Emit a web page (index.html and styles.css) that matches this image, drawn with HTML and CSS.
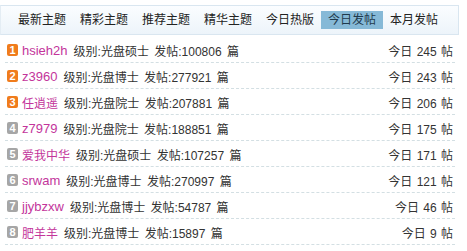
FILE: index.html
```html
<!DOCTYPE html>
<html lang="zh-CN">
<head>
  <meta charset="UTF-8" />
  <title>今日发帖</title>
  <link rel="stylesheet" href="styles.css">
</head>
<body>
  <div class="box">
    <ul class="tabs">
      <li>最新主题</li>
      <li>精彩主题</li>
      <li>推荐主题</li>
      <li>精华主题</li>
      <li>今日热版</li>
      <li class="on">今日发帖</li>
      <li>本月发帖</li>
    </ul>

    <ul class="toplist">
      <li>
        <span class="who"><i class="num hot">1</i><a class="name">hsieh2h</a>级别:光盘硕士 发帖:100806 篇</span>
        <span class="today">今日 245 帖</span>
      </li>
      <li>
        <span class="who"><i class="num hot">2</i><a class="name">z3960</a>级别:光盘博士 发帖:277921 篇</span>
        <span class="today">今日 243 帖</span>
      </li>
      <li>
        <span class="who"><i class="num hot">3</i><a class="name cn">任逍遥</a>级别:光盘院士 发帖:207881 篇</span>
        <span class="today">今日 206 帖</span>
      </li>
      <li>
        <span class="who"><i class="num">4</i><a class="name">z7979</a>级别:光盘院士 发帖:188851 篇</span>
        <span class="today">今日 175 帖</span>
      </li>
      <li>
        <span class="who"><i class="num">5</i><a class="name cn">爱我中华</a>级别:光盘硕士 发帖:107257 篇</span>
        <span class="today">今日 171 帖</span>
      </li>
      <li>
        <span class="who"><i class="num">6</i><a class="name">srwam</a>级别:光盘博士 发帖:270997 篇</span>
        <span class="today">今日 121 帖</span>
      </li>
      <li>
        <span class="who"><i class="num">7</i><a class="name">jjybzxw</a>级别:光盘博士 发帖:54787 篇</span>
        <span class="today">今日 46 帖</span>
      </li>
      <li>
        <span class="who"><i class="num">8</i><a class="name cn">肥羊羊</a>级别:光盘博士 发帖:15897 篇</span>
        <span class="today">今日 9 帖</span>
      </li>
    </ul>
  </div>
</body>
</html>
```

FILE: styles.css
```css
body {
  margin: 0;
  background: #fff;
  font-family: "Liberation Sans", "Noto Sans CJK SC", sans-serif;
  font-size: 12px;
  color: #333;
}
.box {
  width: 459px;
  padding-top: 5px;
}
.tabs {
  list-style: none;
  margin: 0;
  padding: 0 0 0 10px;
  height: 28px;
  display: flex;
  align-items: center;
  border: 1px solid #d9e6f0;
  border-left-color: #e4edf4;
  background: linear-gradient(#fbfdff, #edf4fa);
}
.tabs li {
  width: 62px;
  height: 18px;
  line-height: 18px;
  text-align: center;
  font-size: 12px;
  color: #222;
}
.tabs li.on {
  background: #86b9d7;
  color: #1f3a4d;
}
.toplist {
  list-style: none;
  margin: 0;
  padding: 0 4px 0 5px;
}
.toplist li {
  height: 24px;
  margin-top: 1px;
  display: flex;
  align-items: center;
  justify-content: space-between;
  padding: 0 2px;
  border-bottom: 1px dashed #d3dfe3;
}
.toplist li:first-child {
  margin-top: 3px;
}
.who {
  display: flex;
  align-items: center;
  white-space: pre;
  word-spacing: 2px;
}
.num {
  width: 11px;
  height: 12px;
  line-height: 12px;
  border-radius: 2px;
  background: #a6a6a6;
  color: #fff;
  font-style: normal;
  font-size: 11px;
  font-weight: bold;
  text-align: center;
  margin-right: 4px;
}
.num.hot {
  background: #f07c1c;
}
.name {
  color: #c3359b;
  font-size: 13px;
  margin-right: 6px;
}
.name.cn {
  font-size: 12px;
}
.today {
  word-spacing: 1px;
}
```
